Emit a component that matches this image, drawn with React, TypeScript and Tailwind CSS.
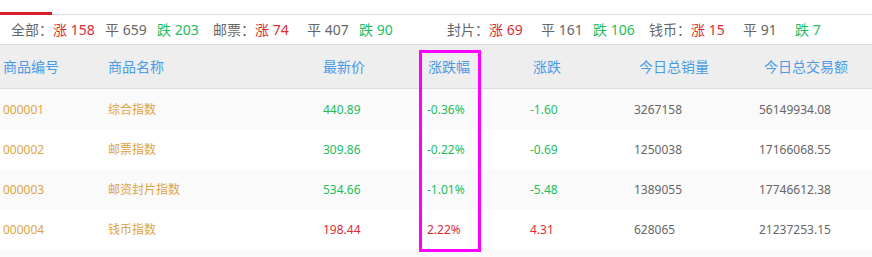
import React from "react";

type Stat = { label: string; up: number; flat: number; down: number };

const leftStats: Stat[] = [
	{ label: "全部：", up: 158, flat: 659, down: 203 },
	{ label: "邮票：", up: 74, flat: 407, down: 90 },
];
const rightStats: Stat[] = [
	{ label: "封片：", up: 69, flat: 161, down: 106 },
	{ label: "钱币：", up: 15, flat: 91, down: 7 },
];

const rows = [
	{ code: "000001", name: "综合指数", price: "440.89", pct: "-0.36%", chg: "-1.60", vol: "3267158", amt: "56149934.08" },
	{ code: "000002", name: "邮票指数", price: "309.86", pct: "-0.22%", chg: "-0.69", vol: "1250038", amt: "17166068.55" },
	{ code: "000003", name: "邮资封片指数", price: "534.66", pct: "-1.01%", chg: "-5.48", vol: "1389055", amt: "17746612.38" },
	{ code: "000004", name: "钱币指数", price: "198.44", pct: "2.22%", chg: "4.31", vol: "628065", amt: "21237253.15" },
];

const font = { fontFamily: '"Noto Sans", "Noto Sans CJK SC", sans-serif' };
const cols = "grid grid-cols-[105px_215px_104px_105px_104px_125px_1fr]";

function StatGroup({ s }: { s: Stat }) {
	return (
		<div className="flex mr-[4px]">
			<span className="w-[42px] text-[#666]">{s.label}</span>
			<span className="w-[52px] text-[#dd2c36]">涨 {s.up}</span>
			<span className="w-[52px] text-[#666]">平 {s.flat}</span>
			<span className="w-[52px] text-[#1ebd5c]">跌 {s.down}</span>
		</div>
	);
}

export default function App() {
	return (
		<main className="w-[872px] h-[257px] bg-white overflow-hidden" style={font}>
			<div className="h-[15px] border-b border-[#dcdcdc] flex">
				<div className="w-[52px] h-[15px] border-b-[3px] border-[#d61f2b] -mb-px"></div>
			</div>
			<div className="h-[30px] flex items-center text-[14px] border-b border-[#dcdcdc]">
				<div className="w-[436px] flex pl-[11px]">
					{leftStats.map((s) => (
						<StatGroup key={s.label} s={s} />
					))}
				</div>
				<div className="w-[436px] flex pl-[11px]">
					{rightStats.map((s) => (
						<StatGroup key={s.label} s={s} />
					))}
				</div>
			</div>
			<div className="relative">
				<header className={`${cols} h-[44px] items-center bg-[#eeeeee] border-b border-[#dcdcdc] text-[14px] text-[#4a9be6]`}>
					<span className="pl-[3px]">商品编号</span>
					<span className="pl-[3px]">商品名称</span>
					<span className="pl-[3px]">最新价</span>
					<span className="pl-[4px]">涨跌幅</span>
					<span className="pl-[4px]">涨跌</span>
					<span className="pl-[6px]">今日总销量</span>
					<span className="pl-[6px]">今日总交易额</span>
				</header>
				{rows.map((r, i) => {
					const color = r.chg.startsWith("-") ? "text-[#1ebd5c]" : "text-[#dd2c36]";
					return (
						<section
							key={r.code}
							className={`${cols} h-[40px] pt-[2px] items-center text-[12px] ${i % 2 == 0 ? "bg-[#fafafa]" : "bg-white"}`}
						>
							<span className="pl-[3px] text-[#dea348]">{r.code}</span>
							<span className="pl-[3px] text-[#dea348]">{r.name}</span>
							<span className={`pl-[3px] ${color}`}>{r.price}</span>
							<span className={`pl-[3px] ${color}`}>{r.pct}</span>
							<span className={`pl-[1px] ${color}`}>{r.chg}</span>
							<span className="pl-[1px] text-[#666]">{r.vol}</span>
							<span className="pl-[1px] text-[#666]">{r.amt}</span>
						</section>
					);
				})}
				<div className="h-[10px] bg-[#fafafa]"></div>
				{/* highlight box */}
				<div className="absolute left-[419px] top-[5px] w-[62px] h-[202px] border-[3px] border-[#ff00ff]"></div>
			</div>
		</main>
	);
}
